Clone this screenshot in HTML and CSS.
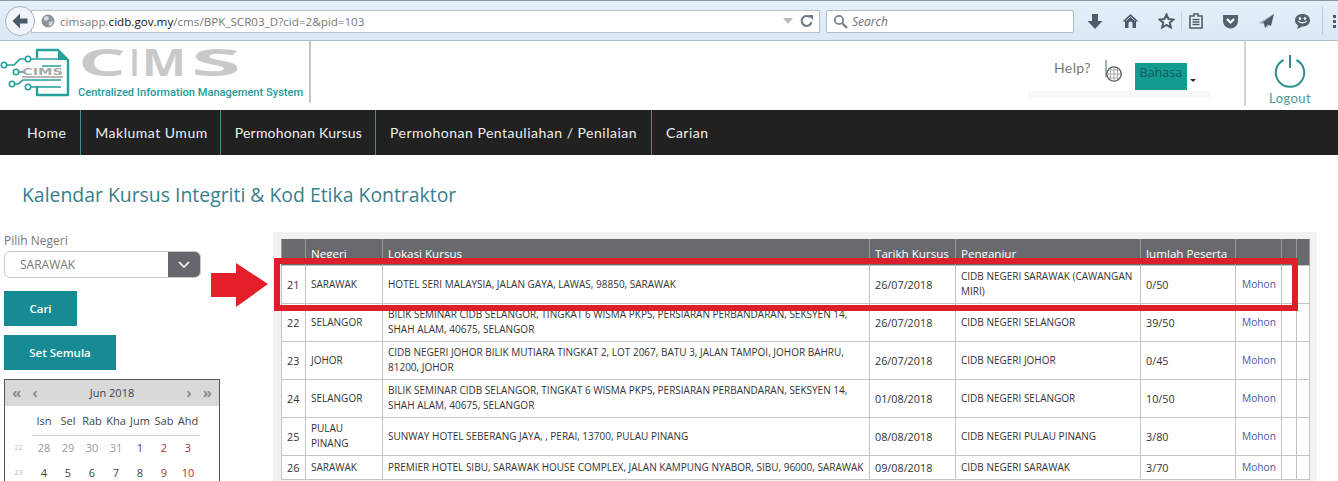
FILE: index.html
```html
<!DOCTYPE html>
<html lang="en">
  <head>
    <meta charset="UTF-8" />
    <title>Kalendar Kursus</title>
    <link rel="stylesheet" href="styles.css">
  </head>
  <body>
    <div class="browser">
      <div class="back">
        <svg width="18" height="16" viewBox="0 0 18 16"><path d="M9 0.5 L1.5 8 L9 15.5 L9 10.5 L16.5 10.5 L16.5 5.5 L9 5.5 Z" fill="#4a5a6a"/></svg>
      </div>
      <div class="urlbar">
        <svg class="globe-small" width="14" height="14" viewBox="0 0 14 14"><circle cx="7" cy="7" r="6.5" fill="#8d949c"/><path d="M3 3 L7 2 L8 5 L5 7 L3 6 Z M8 8 L12 7 L11 11 L8 12 Z" fill="#d5d9dd"/></svg>
        <span class="url">cimsapp.<b>cidb.gov.my</b>/cms/BPK_SCR03_D?cid=2&amp;pid=103</span>
        <svg class="url-drop" width="10" height="6" viewBox="0 0 10 6"><path d="M0 0 H10 L5 6 Z" fill="#b4bbc2"/></svg>
        <svg class="url-reload" width="14" height="14" viewBox="0 0 14 14"><path d="M11.5 8 A5 5 0 1 1 10 3.2" fill="none" stroke="#6b7785" stroke-width="2"/><path d="M8 1 H13 V6 Z" fill="#6b7785"/></svg>
      </div>
      <div class="searchbar">
        <svg width="15" height="15" viewBox="0 0 15 15"><circle cx="6" cy="6" r="4.2" fill="none" stroke="#76838f" stroke-width="1.8"/><path d="M9 9 L14 14" stroke="#76838f" stroke-width="2.4"/></svg>
        <span>Search</span>
      </div>
      <div class="tools">
        <svg width="16" height="17" viewBox="0 0 16 17"><path d="M5 1 H11 V8 H15.5 L8 16 L.5 8 H5 Z" fill="#4d5b6b"/></svg>
        <svg width="17" height="16" viewBox="0 0 17 16"><path d="M8.5 1 L16.5 8.5 H14 V15 H10.5 V10.5 A2 2 0 0 0 6.5 10.5 V15 H3 V8.5 H.5 Z" fill="#4d5b6b"/><path d="M8.5 3.6 L13 7.8 M8.5 3.6 L4 7.8" stroke="#dfeaf5" stroke-width=".8"/></svg>
        <svg width="17" height="16" viewBox="0 0 17 16"><path d="M8.5 1.5 L10.5 6 L15.5 6.5 L11.7 9.7 L12.9 14.5 L8.5 12 L4.1 14.5 L5.3 9.7 L1.5 6.5 L6.5 6 Z" fill="#eef4fa" stroke="#4d5b6b" stroke-width="2"/></svg>
        <div class="tool-sep"></div>
        <svg width="14" height="16" viewBox="0 0 14 16"><path d="M1 3 H5 V1 H9 V3 H13 V15 H1 Z" fill="#eef4fa" stroke="#4d5b6b" stroke-width="1.6"/><path d="M3.5 6.5 H10.5 M3.5 9 H10.5 M3.5 11.5 H10.5" stroke="#4d5b6b" stroke-width="1.4"/></svg>
        <svg width="17" height="15" viewBox="0 0 17 15"><path d="M1 1 H16 V7 A7.5 7.5 0 0 1 1 7 Z" fill="#56636f"/><path d="M5 5 L8.5 8.5 L12 5" fill="none" stroke="#fff" stroke-width="2.2"/></svg>
        <svg width="17" height="16" viewBox="0 0 17 16"><path d="M16 1 L1 10 L7 11 L9 15 Z" fill="#97a1ab"/><path d="M16 1 L5.5 9 L7 15 L9.5 11.5 L13 13 Z" fill="#4d5b6b"/></svg>
        <svg width="17" height="17" viewBox="0 0 17 17"><path d="M8.5 1 C13 1 16 3.6 16 7.2 C16 10.8 13 13.4 8.5 13.4 L3 16 L4.2 12.4 C2.2 11.2 1 9.4 1 7.2 C1 3.6 4 1 8.5 1 Z" fill="#56636f"/><circle cx="6" cy="5.6" r="1.3" fill="#fff"/><circle cx="11" cy="5.6" r="1.3" fill="#fff"/><path d="M4.5 8 C6 10.4 11 10.4 12.5 8" fill="none" stroke="#fff" stroke-width="1.2"/></svg>
        <div class="tool-sep-end"></div>
        <div class="tool-more"></div>
      </div>
    </div>

    <header class="site-head">
      <div class="logo">
        <svg width="72" height="50" viewBox="0 0 72 50">
          <path d="M37 10 V2 H58 L68 12 V47 H37 V38" fill="none" stroke="#25a09a" stroke-width="2.4" stroke-linejoin="round"/>
          <path d="M58 2 V12 H68 Z" fill="#25a09a"/>
          <path d="M6 17 H14 L20 11 H60 M18 24 H24 M14 36 H18 L23 32 H61 M30 39 H61 M42 18 H61" fill="none" stroke="#25a09a" stroke-width="1.7"/>
          <circle cx="4" cy="17" r="2.7" fill="#fff" stroke="#25a09a" stroke-width="1.6"/>
          <circle cx="28" cy="11" r="2.7" fill="#fff" stroke="#25a09a" stroke-width="1.6"/>
          <circle cx="16" cy="24" r="2.7" fill="#fff" stroke="#25a09a" stroke-width="1.6"/>
          <circle cx="12" cy="36" r="2.7" fill="#fff" stroke="#25a09a" stroke-width="1.6"/>
          <circle cx="28" cy="39" r="2.7" fill="#fff" stroke="#25a09a" stroke-width="1.6"/>
          <text x="22" y="27" font-family="DejaVu Sans" font-weight="700" font-size="9" fill="#a9a9a9" textLength="41" lengthAdjust="spacingAndGlyphs">CIMS</text>
          <rect x="22" y="28" width="41" height="2" fill="#b5b5b5"/>
        </svg>
        <div class="logo-words">
          <svg class="logo-big" width="164" height="50" viewBox="0 0 164 50">
            <g font-family="Open Sans" font-weight="700" font-size="37" fill="#c9c9c9">
              <text x="0" y="40" textLength="48" lengthAdjust="spacingAndGlyphs">C</text>
              <text x="52" y="40" textLength="9" lengthAdjust="spacingAndGlyphs">I</text>
              <text x="64" y="40" textLength="44" lengthAdjust="spacingAndGlyphs">M</text>
              <text x="113" y="40" textLength="50" lengthAdjust="spacingAndGlyphs">S</text>
            </g>
          </svg>
          <div class="logo-sub">Centralized Information Management System</div>
        </div>
      </div>
      <div class="head-right">
        <div class="lang">
          <span class="help">Help?</span>
          <svg class="lang-globe" width="20" height="24" viewBox="0 0 20 24"><path d="M2 1 V18" stroke="#3b6b70" stroke-width="1"/><circle cx="10" cy="15" r="7.2" fill="#fff" stroke="#555" stroke-width="1.3"/><path d="M3 15 H17 M10 8 V22 M4.5 11 H15.5 M4.5 19 H15.5 M6.5 9 V21 M13.5 9 V21" stroke="#888" stroke-width=".7"/></svg>
          <span class="bahasa">Bahasa</span>
          <span class="caret"></span>
        </div>
        <div class="logout">
          <svg width="34" height="34" viewBox="0 0 34 34"><path d="M10.5 6 A14.2 14.2 0 1 0 23.5 6" fill="none" stroke="#2b8f8d" stroke-width="2"/><path d="M17 1 V14" stroke="#2b8f8d" stroke-width="2"/></svg>
          <span>Logout</span>
        </div>
      </div>
    </header>

    <nav class="menu">
      <a class="first">Home</a>
      <a class="second">Maklumat Umum</a>
      <a class="tight">Permohonan Kursus</a>
      <a class="long">Permohonan Pentauliahan / Penilaian</a>
      <a class="last">Carian</a>
    </nav>

    <h1 class="page-title">Kalendar Kursus Integriti &amp; Kod Etika Kontraktor</h1>

    <main class="content">
      <aside class="side">
        <label class="side-label">Pilih Negeri</label>
        <div class="select">
          <span>SARAWAK</span>
          <div class="select-btn">
            <svg width="12" height="8" viewBox="0 0 12 8"><path d="M1 1 L6 6 L11 1" fill="none" stroke="#fff" stroke-width="1.6"/></svg>
          </div>
        </div>
        <button class="btn btn-cari">Cari</button>
        <button class="btn btn-reset">Set Semula</button>
        <div class="calendar">
          <div class="cal-head">
            <div class="cal-arrows"><span>«</span><span>‹</span></div>
            <span class="cal-month">Jun 2018</span>
            <div class="cal-arrows"><span>›</span><span>»</span></div>
          </div>
          <div class="cal-grid cal-names">
            <i></i><b>Isn</b><b>Sel</b><b>Rab</b><b>Kha</b><b>Jum</b><b>Sab</b><b>Ahd</b>
          </div>
          <div class="cal-grid">
            <i>22</i><span class="dim">28</span><span class="dim">29</span><span class="dim">30</span><span class="dim">31</span><span>1</span><span class="red">2</span><span class="red">3</span>
          </div>
          <div class="cal-grid">
            <i>23</i><span>4</span><span>5</span><span>6</span><span>7</span><span>8</span><span class="red">9</span><span class="red">10</span>
          </div>
        </div>
      </aside>

      <section class="panel">
        <table class="courses">
          <colgroup>
            <col class="c-no"><col class="c-state"><col class="c-place"><col class="c-date"><col class="c-org"><col class="c-count"><col class="c-link"><col class="c-x1"><col class="c-x2">
          </colgroup>
          <thead>
            <tr>
              <th></th><th>Negeri</th><th>Lokasi Kursus</th><th>Tarikh Kursus</th><th>Penganjur</th><th>Jumlah Peserta</th><th></th><th></th><th></th>
            </tr>
          </thead>
          <tbody>
            <tr>
              <td class="num">21</td><td>SARAWAK</td><td>HOTEL SERI MALAYSIA, JALAN GAYA, LAWAS, 98850, SARAWAK</td><td class="num">26/07/2018</td><td>CIDB NEGERI SARAWAK (CAWANGAN MIRI)</td><td class="num">0/50</td><td><a>Mohon</a></td><td></td><td></td>
            </tr>
            <tr>
              <td class="num">22</td><td>SELANGOR</td><td>BILIK SEMINAR CIDB SELANGOR, TINGKAT 6 WISMA PKPS, PERSIARAN PERBANDARAN, SEKSYEN 14, SHAH ALAM, 40675, SELANGOR</td><td class="num">26/07/2018</td><td>CIDB NEGERI SELANGOR</td><td class="num">39/50</td><td><a>Mohon</a></td><td></td><td></td>
            </tr>
            <tr>
              <td class="num">23</td><td>JOHOR</td><td>CIDB NEGERI JOHOR BILIK MUTIARA TINGKAT 2, LOT 2067, BATU 3, JALAN TAMPOI, JOHOR BAHRU, 81200, JOHOR</td><td class="num">26/07/2018</td><td>CIDB NEGERI JOHOR</td><td class="num">0/45</td><td><a>Mohon</a></td><td></td><td></td>
            </tr>
            <tr>
              <td class="num">24</td><td>SELANGOR</td><td>BILIK SEMINAR CIDB SELANGOR, TINGKAT 6 WISMA PKPS, PERSIARAN PERBANDARAN, SEKSYEN 14, SHAH ALAM, 40675, SELANGOR</td><td class="num">01/08/2018</td><td>CIDB NEGERI SELANGOR</td><td class="num">10/50</td><td><a>Mohon</a></td><td></td><td></td>
            </tr>
            <tr>
              <td class="num">25</td><td>PULAU PINANG</td><td>SUNWAY HOTEL SEBERANG JAYA, , PERAI, 13700, PULAU PINANG</td><td class="num">08/08/2018</td><td>CIDB NEGERI PULAU PINANG</td><td class="num">3/80</td><td><a>Mohon</a></td><td></td><td></td>
            </tr>
            <tr class="r-last">
              <td class="num">26</td><td>SARAWAK</td><td>PREMIER HOTEL SIBU, SARAWAK HOUSE COMPLEX, JALAN KAMPUNG NYABOR, SIBU, 96000, SARAWAK</td><td class="num">09/08/2018</td><td>CIDB NEGERI SARAWAK</td><td class="num">3/70</td><td><a>Mohon</a></td><td></td><td></td>
            </tr>
          </tbody>
        </table>
      </section>
    </main>

    <div class="mark-box"></div>
    <svg class="mark-arrow" width="58" height="44" viewBox="0 0 58 44"><path d="M1 10 H26 V0 L58 21 L26 44 V34 H1 Z" fill="#e3202a"/></svg>
  </body>
</html>
```

FILE: styles.css
```css
* {
  box-sizing: border-box;
  margin: 0px;
  padding: 0px;
}
html,
body {
  height: 481px;
  overflow: hidden;
}
body {
  background: #fff;
  font-family: "Open Sans", sans-serif;
  color: #333;
  position: relative;
}

/* browser toolbar */
.browser {
  height: 41px;
  display: flex;
  align-items: center;
  padding: 1px 0 0 5px;
  background: linear-gradient(#e6eff8, #dbe8f5);
  border-top: 1px solid #8a97a3;
  border-bottom: 1px solid #a9bccd;
}
.back {
  width: 30px;
  height: 30px;
  border-radius: 50%;
  background: #f1f5f9;
  border: 1px solid #a7b4c0;
  display: flex;
  align-items: center;
  justify-content: center;
  flex: none;
  z-index: 1;
}
.urlbar {
  flex: none;
  width: 789px;
  height: 23px;
  margin-left: -4px;
  background: #fff;
  border: 1px solid #b4c2ce;
  display: flex;
  align-items: center;
  padding-left: 9px;
  font-size: 11.65px;
  color: #777;
}
.globe-small {
  margin-right: 4px;
}
.url {
  flex: 1;
  margin-left: 1px;
}
.url b {
  font-weight: 400;
  color: #111;
}
.url-drop {
  margin-right: 7px;
}
.url-reload {
  margin-right: 5px;
}
.searchbar {
  flex: none;
  width: 248px;
  height: 23px;
  margin-left: 6px;
  background: #fff;
  border: 1px solid #aebccb;
  border-radius: 2px;
  display: flex;
  align-items: center;
  gap: 4px;
  padding-left: 6px;
  font-size: 12px;
  font-style: italic;
  color: #6f6f6f;
}
.tools {
  flex: none;
  display: flex;
  align-items: center;
  gap: 19px;
  margin-left: 13px;
}
.tool-sep {
  width: 1px;
  height: 20px;
  margin: 0 -12px 0 -13px;
  background: #c6d3df;
}
.tool-sep-end {
  width: 1px;
  height: 28px;
  margin-left: -8px;
  background: #b9c7d4;
}
.tool-more {
  width: 3px;
  height: 13px;
  margin-left: -9px;
  background: repeating-linear-gradient(#4d5b6b 0 3px, transparent 3px 5px);
}

/* site header */
.site-head {
  height: 69px;
  display: flex;
  justify-content: space-between;
}
.logo {
  width: 311px;
  height: 62px;
  display: flex;
  padding: 6px 0 0 0;
  border-right: 2px solid #c4c4c4;
}
.logo > svg {
  flex: none;
  margin-top: 1px;
}
.logo-words {
  margin-left: 6px;
}
.logo-big {
  display: block;
  margin-top: -11px;
}
.logo-sub {
  font-family: Roboto, sans-serif;
  font-size: 11.1px;
  font-weight: 500;
  color: #1f9a9c;
  white-space: nowrap;
}
.head-right {
  display: flex;
}
.lang {
  width: 182px;
  height: 57px;
  margin-right: 34px;
  padding-top: 15px;
  display: flex;
  align-items: flex-start;
  border-bottom: 7px solid #f8f8f8;
}
.help {
  margin: 3px 0 0 26px;
  font-family: Lato, sans-serif;
  font-size: 14px;
  letter-spacing: 0.4px;
  color: #777;
}
.lang-globe {
  margin-left: 13px;
  margin-top: 3px;
}
.bahasa {
  width: 52px;
  height: 27px;
  margin: 7px 0 0 11px;
  background: #139b90;
  color: #145a5a;
  font-size: 12.5px;
  line-height: 19px;
  text-align: center;
}
.caret {
  margin: 23px 0 0 3px;
  border-top: 3px solid #333;
  border-left: 3px solid transparent;
  border-right: 3px solid transparent;
}
.logout {
  width: 94px;
  height: 65px;
  border-left: 2px solid #d4d4d4;
  display: flex;
  flex-direction: column;
  align-items: center;
  gap: 2px;
  padding: 13px 4px 0 0;
  font-family: Lato, sans-serif;
  font-size: 13px;
  letter-spacing: 0.4px;
  color: #4b9a9a;
}

/* nav */
.menu {
  height: 45px;
  background: #212121;
  display: flex;
  font-family: Lato, sans-serif;
  font-size: 14px;
  letter-spacing: 0.5px;
  color: #eee;
}
.menu a {
  padding: 0 13px 0 14px;
  line-height: 45px;
  border-right: 1px solid #3f8f90;
  white-space: nowrap;
}
.menu a.first {
  padding: 0 14px 0 27px;
}
.menu a.second {
  padding-right: 12px;
}
.menu a.tight {
  letter-spacing: 0.22px;
}
.menu a.long {
  padding-right: 14px;
}
.menu a.last {
  border-right: 0;
}

.page-title {
  margin: 28px 0 0 22px;
  height: 49px;
  font-size: 19.4px;
  font-weight: 400;
  line-height: 24px;
  color: #37808c;
}

/* main */
.content {
  display: flex;
  align-items: flex-start;
}
.side {
  width: 273px;
  flex: none;
  padding: 1px 0 0 4px;
}
.side-label {
  display: block;
  font-size: 12px;
  line-height: 16px;
  color: #777;
}
.select {
  width: 197px;
  height: 27px;
  margin-top: 2px;
  border: 1px solid #c8c8c8;
  border-radius: 6px;
  display: flex;
  justify-content: space-between;
  overflow: hidden;
  font-size: 12px;
  line-height: 26px;
  color: #777;
}
.select span {
  padding-left: 15px;
}
.select-btn {
  width: 32px;
  background: #66676c;
  display: flex;
  align-items: center;
  justify-content: center;
}
.btn {
  display: block;
  height: 35px;
  border: 0;
  background: #178b93;
  color: #fff;
  font-family: "Open Sans", sans-serif;
  font-size: 11.5px;
  font-weight: 600;
}
.btn-cari {
  width: 73px;
  margin-top: 13px;
}
.btn-reset {
  width: 112px;
  margin-top: 9px;
}
.calendar {
  width: 216px;
  height: 110px;
  margin-top: 9px;
  border: 1px solid #555;
  border-bottom: 0;
  font-size: 11px;
  color: #444;
}
.cal-head {
  height: 26px;
  background: #d9d9d9;
  display: flex;
  justify-content: space-between;
  align-items: center;
  padding: 0 7px 2px;
}
.cal-arrows {
  display: flex;
  gap: 11px;
  font-size: 15px;
  font-weight: 700;
  line-height: 20px;
  color: #8c8c8c;
}
.cal-grid {
  display: grid;
  grid-template-columns: 27px repeat(7, 24px);
  height: 25px;
  line-height: 25px;
  text-align: center;
}
.cal-grid i {
  font-style: normal;
  font-size: 7px;
  color: #bbb;
}
.cal-names {
  height: 29px;
  line-height: 29px;
}
.cal-names b {
  font-weight: 400;
  border-bottom: 1px solid #ccc;
}
.dim {
  color: #999;
}
.red {
  color: #a33;
}

.panel {
  width: 1044px;
  height: 260px;
  flex: none;
  background: #f2f2f2;
  padding: 7px 8px 0;
}
.courses {
  width: 1028px;
  table-layout: fixed;
  border-collapse: collapse;
  background: #fff;
  font-size: 10px;
  color: #333;
}
.c-no { width: 24px; }
.c-state { width: 77px; }
.c-place { width: 487px; }
.c-date { width: 86px; }
.c-org { width: 185px; }
.c-count { width: 95px; }
.c-link { width: 46px; }
.c-x1 { width: 15px; }
.c-x2 { width: 13px; }
.courses th {
  height: 26px;
  background: #696a6d;
  color: #fff;
  font-size: 11.6px;
  font-weight: 400;
  text-align: left;
  padding: 3px 5px 0;
  border: 1px solid #999;
  border-width: 0 1px;
  line-height: 21px;
  white-space: nowrap;
}
.courses td {
  height: 38px;
  padding: 0 5px;
  border: 1px solid #c4c4c4;
  line-height: 15px;
}
.courses td.num {
  font-size: 10.8px;
}
.courses tr.r-last td {
  height: 24px;
  white-space: nowrap;
}
.courses a {
  color: #4a56b0;
  font-size: 10.2px;
  padding-left: 1px;
}

/* annotation drawn over the screenshot */
.mark-box {
  position: absolute;
  left: 274px;
  top: 258px;
  width: 1024px;
  height: 53px;
  border: 6px solid #dc1f2b;
}
.mark-arrow {
  position: absolute;
  left: 210px;
  top: 263px;
}
```
